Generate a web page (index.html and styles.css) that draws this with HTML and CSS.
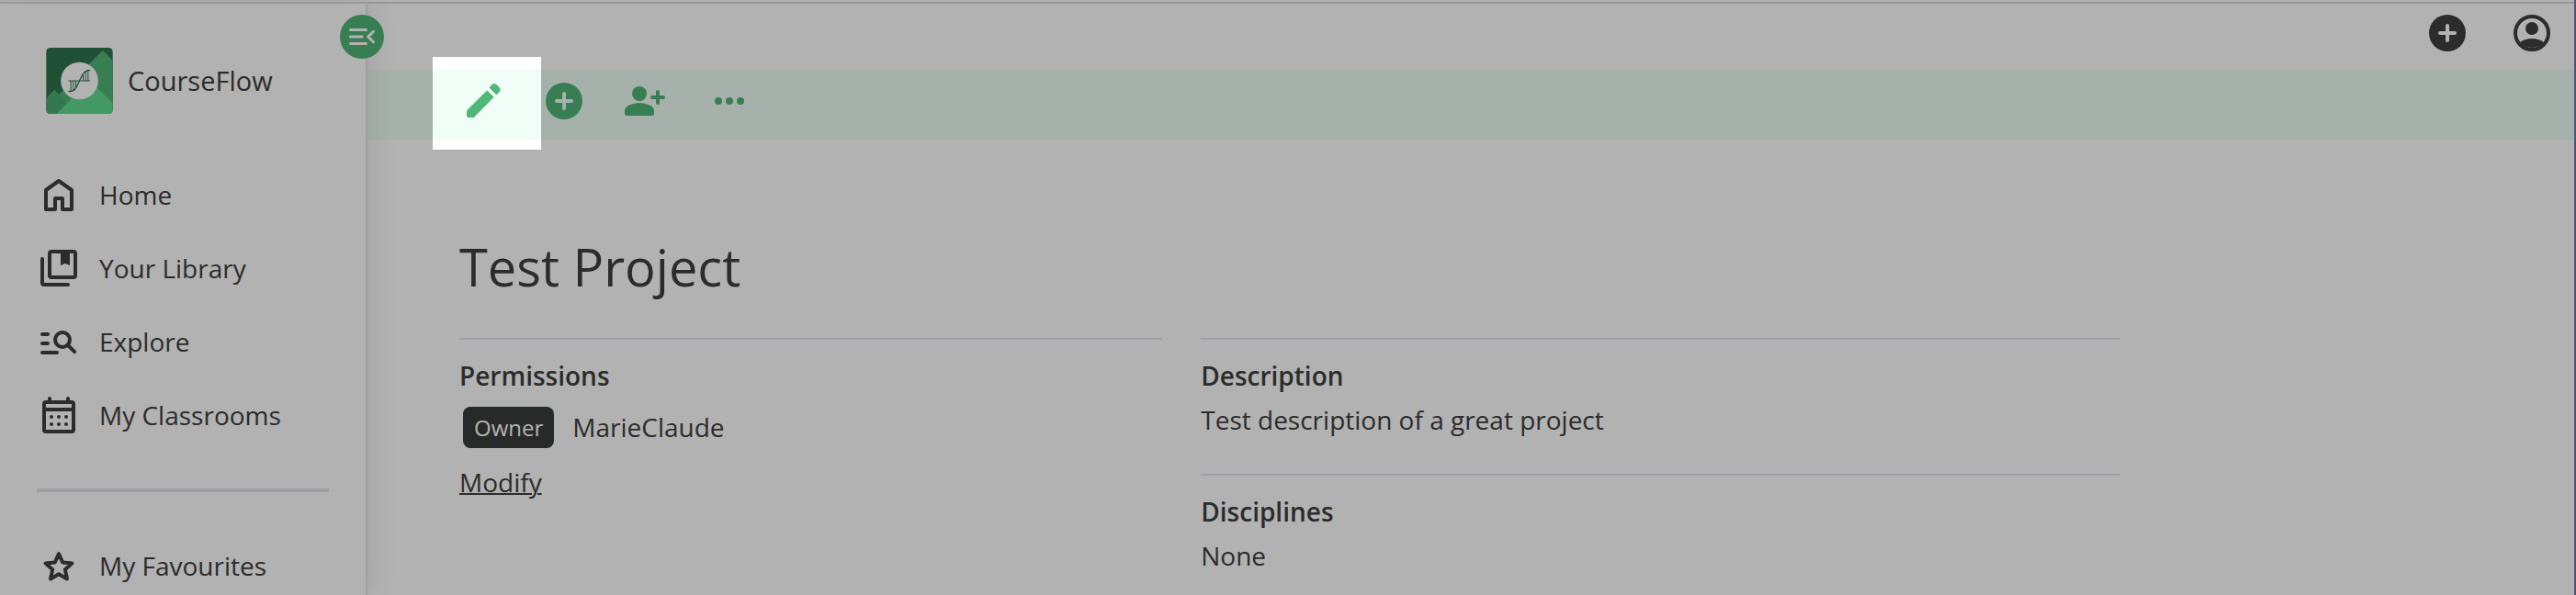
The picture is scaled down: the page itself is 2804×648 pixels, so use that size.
FILE: index.html
```
<!DOCTYPE html>
<html lang="en">
<head>
    <meta charset="UTF-8">
    <meta name="viewport" content="width=device-width, initial-scale=1.0">
    <title>CourseFlow - Test Project</title>
    <link rel="stylesheet" href="styles.css">
</head>
<body>

<div class="page">

    <!-- Sidebar -->
    <aside class="sidebar">
        <a class="brand" href="#">
            <svg class="logo" viewBox="0 0 218 216" aria-hidden="true">
                <clipPath id="logoClip"><rect width="218" height="216" rx="14"/></clipPath>
                <g clip-path="url(#logoClip)">
                    <rect width="218" height="216" fill="#2e734c"/>
                    <path d="M185 8 218 42V216H0V195Z" fill="#4fb777"/>
                    <path d="M27 137 106 216H0V165Z" fill="#4cab72"/>
                    <path d="M143 107 218 182V216H34Z" fill="#60dc90"/>
                    <circle cx="109" cy="108" r="61" fill="#fff"/>
                    <g fill="none" stroke="#2e734c" stroke-width="3">
                        <path d="M73 143c26 0 27-17 36-35s14-35 35-35" stroke-width="4"/>
                        <path d="M73 108h71M81 108v33M89 108v30M97 108v24M121 84v24M129 77v31M137 74v34"/>
                    </g>
                </g>
            </svg>
            <span>CourseFlow</span>
        </a>

        <button class="toggle" type="button" aria-label="Collapse sidebar">
            <svg viewBox="0 0 24 24"><path class="line" d="M3.7 7H15M3.7 12H12M3.7 17H15M20.3 8.2 16.5 12l3.8 3.8"/></svg>
        </button>

        <nav>
            <a href="#">
                <svg class="icon" viewBox="0 0 24 24"><path class="line" d="M5 9.5V20h5v-6h4v6h5V9.5L12 4.5Z"/></svg>
                Home
            </a>
            <a href="#">
                <svg class="icon" viewBox="0 0 24 24">
                    <rect class="line" x="7" y="3" width="14" height="14" rx="1"/>
                    <path class="line" d="M3 7v13a1 1 0 0 0 1 1h13"/>
                    <path d="M13 3h5v7.5L15.5 9.5 13 10.5z"/>
                </svg>
                Your Library
            </a>
            <a href="#">
                <svg class="icon" viewBox="0 0 24 24">
                    <path class="line" d="M3 8h3M3 13h3M3 18h8M17 14l3.6 3.6"/>
                    <circle class="line" cx="14" cy="11" r="4"/>
                </svg>
                Explore
            </a>
            <a href="#">
                <svg class="icon" viewBox="0 0 24 24">
                    <rect class="line" x="4" y="5" width="16" height="16" rx="1"/>
                    <path class="line" d="M7 3v2M17 3v2M4 9h16"/>
                    <circle cx="8" cy="13" r="1"/><circle cx="12" cy="13" r="1"/><circle cx="16" cy="13" r="1"/>
                    <circle cx="8" cy="17" r="1"/><circle cx="12" cy="17" r="1"/><circle cx="16" cy="17" r="1"/>
                </svg>
                My Classrooms
            </a>
            <hr>
            <a href="#">
                <svg class="icon" viewBox="0 0 24 24"><path class="line" d="M12 5.6 14.1 10.2 19.2 10.8 15.4 14.1 16.5 19.2 12 16.6 7.5 19.2 8.6 14.1 4.8 10.8 9.9 10.2Z"/></svg>
                My Favourites
            </a>
        </nav>
    </aside>

    <!-- Main area -->
    <div class="content">
        <header class="topbar">
            <button class="icon-button" type="button" aria-label="Create">
                <svg class="icon" viewBox="0 0 24 24"><circle cx="12" cy="12" r="10"/><path class="line cut" d="M12 8v8M8 12h8"/></svg>
            </button>
            <button class="icon-button" type="button" aria-label="Account">
                <svg class="icon" viewBox="0 0 24 24">
                    <circle class="line" cx="12" cy="12" r="9"/>
                    <circle cx="12" cy="9.5" r="3.5"/>
                    <path d="M5.3 17.2C7 15.8 9.3 15 12 15s5 .8 6.7 2.2A9.5 9.5 0 0 1 5.3 17.2z"/>
                </svg>
            </button>
        </header>

        <div class="toolbar">
            <div class="actions">
                <div class="highlighted">
                    <button class="icon-button" type="button" aria-label="Edit project">
                        <svg class="icon" viewBox="0 0 24 24">
                            <path d="M14.1 6.2 17.8 9.9 7.1 20.7q-.3.3-.7.3H4q-1 0-1-1V17.6q0-.4.3-.7z"/>
                            <path d="M19.2 8.7 15.3 4.7 16.7 3.1q.6-.6 1.3-.6t1.4.6l1.1 1.2q.8.8.8 1.5t-.7 1.4z"/>
                        </svg>
                    </button>
                    <div class="spotlight"></div>
                </div>
                <button class="icon-button" type="button" aria-label="Add">
                    <svg class="icon" viewBox="0 0 24 24"><circle cx="12" cy="12" r="10"/><path class="line cut" d="M12 8v8M8 12h8"/></svg>
                </button>
                <button class="icon-button" type="button" aria-label="Add contributor">
                    <svg class="icon" viewBox="0 0 24 24">
                        <circle cx="9" cy="8" r="4"/>
                        <path d="M9 13c-2.67 0-8 1.34-8 4v2c0 .55.45 1 1 1h14c.55 0 1-.45 1-1v-2c0-2.66-5.33-4-8-4z"/>
                        <path class="line" d="M19 7v6M16 10h6"/>
                    </svg>
                </button>
            </div>
            <button class="icon-button" type="button" aria-label="More options">
                <svg class="icon" viewBox="0 0 24 24"><circle cx="6" cy="12" r="2"/><circle cx="12" cy="12" r="2"/><circle cx="18" cy="12" r="2"/></svg>
            </button>
        </div>

        <main>
            <h1>Test Project</h1>
            <div class="details">
                <div class="column">
                    <section>
                        <h2>Permissions</h2>
                        <div class="member">
                            <span class="role">Owner</span>
                            <span>MarieClaude</span>
                        </div>
                        <a class="modify" href="#">Modify</a>
                    </section>
                </div>
                <div class="column">
                    <section>
                        <h2>Description</h2>
                        <p>Test description of a great project</p>
                    </section>
                    <section>
                        <h2>Disciplines</h2>
                        <p>None</p>
                    </section>
                </div>
            </div>
        </main>
    </div>

</div>

</body>
</html>
```
FILE: styles.css
```
* {
    box-sizing: border-box;
}
body {
    margin: 0;
    font-family: "Open Sans", "Noto Sans", sans-serif;
    font-size: 28px;
    line-height: 48px;
    color: #404040;
    background-color: #fff;
}
a {
    color: inherit;
    text-decoration: none;
}
button {
    display: block;
    border: none;
    padding: 0;
    background: none;
    color: inherit;
    cursor: pointer;
}
svg {
    display: block;
    fill: currentColor;
}
.line {
    fill: none;
    stroke: currentColor;
    stroke-width: 2;
    stroke-linecap: round;
    stroke-linejoin: round;
}
.cut {
    stroke: #fff;
}
.icon {
    width: 48px;
    height: 48px;
    flex-shrink: 0;
}
.page {
    position: relative;
    display: flex;
    height: 100vh;
    overflow: hidden;
    padding-top: 2px;
    border-right: 2px solid #415885;
}

/* Sidebar */
.sidebar {
    position: relative;
    z-index: 1;
    width: 400px;
    flex-shrink: 0;
    border-top: 2px solid #dcdcdc;
    border-right: 2px solid #e6e6f0;
    background-color: #fff;
    box-shadow: 0 0 32px rgba(0, 0, 0, 0.1);
}
.brand {
    display: flex;
    align-items: center;
    gap: 16px;
    padding: 48px 50px;
    font-size: 29px;
}
.logo {
    width: 73px;
    height: 72px;
}
.toggle {
    position: absolute;
    top: 12px;
    right: -20px;
    display: flex;
    align-items: center;
    justify-content: center;
    width: 48px;
    height: 48px;
    border-radius: 50%;
    background-color: #4fb777;
    color: #fff;
}
.toggle svg {
    width: 36px;
    height: 36px;
}
nav a {
    display: flex;
    align-items: center;
    gap: 20px;
    height: 80px;
    padding: 0 40px;
}
nav hr {
    height: 4px;
    margin: 40px;
    border: none;
    border-top: 2px solid #e6e6f0;
    background-color: #e4e4e4;
}

/* Top bar and toolbar */
.content {
    flex: 1;
    min-width: 0;
    border-top: 2px solid #dcdcdc;
}
.topbar {
    display: flex;
    justify-content: flex-end;
    gap: 44px;
    padding: 8px 22px 16px;
}
.toolbar {
    display: flex;
    gap: 44px;
    padding: 10px 102px 18px;
    background-color: #f0fef7;
    color: #4fb777;
}
.toolbar .cut {
    stroke: #f0fef7;
}
.actions {
    display: flex;
    gap: 40px;
}
.highlighted {
    position: relative;
}
/* Dims everything around the highlighted button */
.spotlight {
    position: absolute;
    z-index: 10;
    top: -24px;
    right: -39px;
    bottom: -29px;
    left: -31px;
    box-shadow: 0 0 0 4000px rgba(0, 0, 0, 0.3);
    pointer-events: none;
}

/* Project */
main {
    max-width: 1908px;
    padding: 100px 0 0 100px;
}
h1 {
    margin: 0 0 40px;
    font-size: 56px;
    font-weight: 400;
    line-height: 76px;
}
h2 {
    margin: 0;
    font-size: 28px;
    font-weight: 600;
}
p {
    margin: 0;
}
.details {
    display: grid;
    grid-template-columns: 13fr 17fr;
    gap: 42px;
}
section {
    padding: 15px 0 35px;
    border-top: 2px solid #e6e6f0;
}
.member {
    display: flex;
    align-items: center;
    gap: 20px;
    margin: 8px 0 12px 4px;
}
.role {
    padding: 0 12px;
    border-radius: 8px;
    background-color: #3a3b3c;
    color: #fff;
    font-size: 24px;
    line-height: 45px;
}
.modify {
    text-decoration: underline;
    text-decoration-thickness: 2px;
}
```
